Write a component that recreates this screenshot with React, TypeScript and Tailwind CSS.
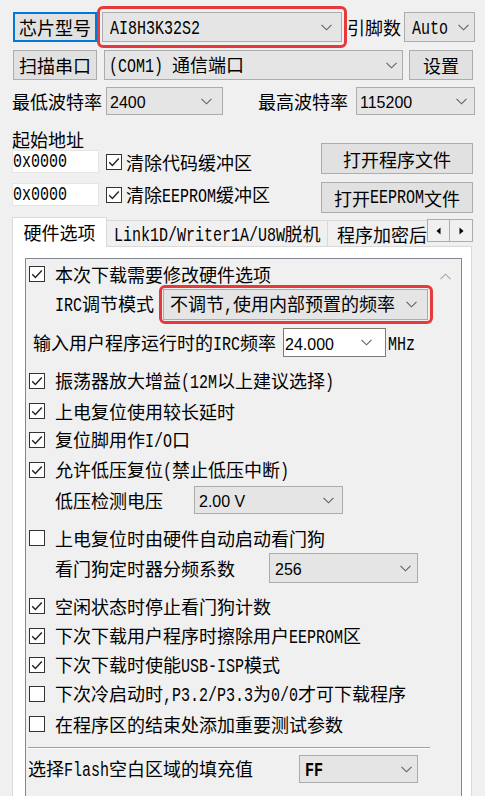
import React from "react";

const CJK = "font-['Noto_Sans_CJK_SC',sans-serif]";

function T({ s }: { s: string }) {
  const parts = s.split(/([\x20-\x7e]+)/);
  return (
    <>
      {parts.map((p, i) =>
        p === "" ? null : /^[\x20-\x7e]+$/.test(p) ? (
          <span
            key={i}
            className="inline-block origin-left scale-x-75 font-['Liberation_Mono',monospace] text-[20px] leading-[16px] whitespace-pre"
            style={{ width: p.length * 9 }}
          >
            {p}
          </span>
        ) : (
          <span key={i}>{p}</span>
        )
      )}
    </>
  );
}

function Sans({ children }: { children: React.ReactNode }) {
  return <span className="font-['Liberation_Sans',sans-serif] text-[16px] whitespace-pre">{children}</span>;
}

function Chev({ up = false, color = "#606060" }: { up?: boolean; color?: string }) {
  return (
    <svg width="11" height="7" viewBox="0 0 11 7" className="shrink-0">
      <polyline
        points={up ? "0.5,6.2 5.5,1.2 10.5,6.2" : "0.5,0.8 5.5,5.8 10.5,0.8"}
        fill="none"
        stroke={color}
        strokeWidth="1.1"
      />
    </svg>
  );
}

function Combo({
  className = "",
  children,
  white = false,
}: {
  className?: string;
  children: React.ReactNode;
  white?: boolean;
}) {
  return (
    <div
      className={
        "flex items-center justify-between shrink-0 border " +
        (white ? "bg-white border-[#7a7a7a] " : "bg-[#e5e5e5] border-[#acacac] ") +
        className
      }
    >
      <span className="whitespace-nowrap">{children}</span>
      <Chev />
    </div>
  );
}

function Btn({ className = "", children }: { className?: string; children: React.ReactNode }) {
  return (
    <div
      className={
        "flex items-center justify-center shrink-0 bg-[#e1e1e1] border border-[#adadad] whitespace-nowrap " +
        className
      }
    >
      {children}
    </div>
  );
}

function Box({ checked = true, className = "" }: { checked?: boolean; className?: string }) {
  return (
    <div className={"w-[16px] h-[16px] shrink-0 border border-[#333333] bg-white flex items-center justify-center " + className}>
      {checked && (
        <svg width="14" height="14" viewBox="0 0 14 14">
          <polyline points="2.2,7.2 5.4,10.4 11.8,3.6" fill="none" stroke="#222222" strokeWidth="1.4" />
        </svg>
      )}
    </div>
  );
}

function CheckRow({
  h,
  s,
  checked = true,
}: {
  h: string;
  s: string;
  checked?: boolean;
}) {
  return (
    <div className={"flex items-center pl-[3px] " + h}>
      <Box checked={checked} />
      <span className="ml-[10px] whitespace-nowrap">
        <T s={s} />
      </span>
    </div>
  );
}

function Tri({ left }: { left: boolean }) {
  return (
    <svg width="5" height="8" viewBox="0 0 5 8">
      <polygon points={left ? "4.5,0.5 0.5,4 4.5,7.5" : "0.5,0.5 4.5,4 0.5,7.5"} fill="#000000" />
    </svg>
  );
}

export default function App() {
  return (
    <div className={`w-[485px] h-[796px] overflow-hidden bg-[#f0f0f0] text-black text-[18px] leading-none pt-[12px] ${CJK}`}>
      {/* Row 1 */}
      <div className="flex items-center h-[30px] pl-[13px]">
        <div className="w-[84px] h-[30px] shrink-0 flex items-center justify-center bg-[#e1e1e1] border-2 border-[#0078d7]">
          芯片型号
        </div>
        <div className="w-[250px] h-[42px] shrink-0 border-[3px] border-[#e5393c] rounded-[6px] flex items-center pl-[2px]">
          <Combo className="w-[240px] h-[30px] pl-[7px] pr-[9px]">
            <T s="AI8H3K32S2" />
          </Combo>
        </div>
        <span className="w-[57px] shrink-0 whitespace-nowrap">引脚数</span>
        <Combo className="w-[71px] h-[30px] pl-[7px] pr-[5px]">
          <T s="Auto" />
        </Combo>
      </div>

      {/* Row 2 */}
      <div className="flex items-center h-[30px] mt-[8px] pl-[13px]">
        <Btn className="w-[84px] h-[30px]">扫描串口</Btn>
        <Combo className="ml-[7px] w-[299px] h-[30px] pl-[4px] pr-[5px]">
          <T s="(COM1) " />
          通信端口
        </Combo>
        <Btn className="ml-[6px] w-[64px] h-[30px]">设置</Btn>
      </div>

      {/* Row 3 */}
      <div className="flex items-center h-[28px] mt-[7px] pl-[12px]">
        <span className="w-[94px] shrink-0 whitespace-nowrap">最低波特率</span>
        <Combo className="w-[117px] h-[28px] pl-[3px] pr-[10px]">
          <Sans>2400</Sans>
        </Combo>
        <span className="ml-[35px] w-[98px] shrink-0 whitespace-nowrap">最高波特率</span>
        <Combo className="w-[119px] h-[28px] pl-[3px] pr-[7px]">
          <Sans>115200</Sans>
        </Combo>
      </div>

      {/* Start address section */}
      <div className="flex pl-[12px]">
        <div className="w-[300px] shrink-0">
          <div className="h-[18px] mt-[15px] mb-[2px] flex items-center">起始地址</div>
          <div className="flex items-center h-[23px]">
            <div className="w-[87px] h-[23px] bg-white border border-[#e6e6e6] flex items-center">
              <T s="0x0000" />
            </div>
            <Box className="ml-[7px]" />
            <span className="ml-[4px] whitespace-nowrap">清除代码缓冲区</span>
          </div>
          <div className="flex items-center h-[23px] mt-[10px]">
            <div className="w-[87px] h-[23px] bg-white border border-[#e6e6e6] flex items-center">
              <T s="0x0000" />
            </div>
            <Box className="ml-[7px]" />
            <span className="ml-[4px] whitespace-nowrap">
              <T s="清除EEPROM缓冲区" />
            </span>
          </div>
        </div>
        <div className="ml-[9px]">
          <Btn className="w-[152px] h-[31px] mt-[28px]">打开程序文件</Btn>
          <Btn className="w-[152px] h-[31px] mt-[8px]">
            <T s="打开EEPROM文件" />
          </Btn>
        </div>
      </div>

      {/* Tabs */}
      <div className="mt-[4px] ml-[12px] w-[461px] h-[29px] flex items-end relative z-10">
        <div className="w-[95px] h-[30px] -mb-[1px] shrink-0 bg-white border border-b-0 border-[#d9d9d9] flex items-center justify-center pb-[1px]">
          硬件选项
        </div>
        <div className="w-[221px] h-[26px] shrink-0 border-t border-r border-[#d9d9d9] flex items-center justify-center">
          <span className="whitespace-nowrap">
            <T s="Link1D/Writer1A/U8W" />
            脱机
          </span>
        </div>
        <div className="w-[99px] h-[26px] shrink-0 border-t border-[#d9d9d9] flex items-center pl-[9px] overflow-hidden whitespace-nowrap">
          <span className="leading-[22px]">程序加密后下载</span>
        </div>
        <div className="self-start mt-[2px] flex">
          <div className="w-[23px] h-[23px] border border-[#adadad] bg-[#f0f0f0] flex items-center justify-center">
            <Tri left />
          </div>
          <div className="w-[23px] h-[23px] border border-l-0 border-[#adadad] bg-[#f0f0f0] flex items-center justify-center">
            <Tri left={false} />
          </div>
        </div>
      </div>

      {/* Panel */}
      <div className="ml-[12px] w-[460px] h-[560px] bg-white border border-[#d9d9d9] pt-[11px] pl-[12px]">
        <div className="w-[437px] h-[560px] border border-[#828790] bg-[#f0f0f0] flex">
          <div className="w-[404px] shrink-0 flex flex-col">
            <CheckRow h="h-[30px]" s="本次下载需要修改硬件选项" />
            <div className="flex items-center h-[30px] pl-[29px]">
              <span className="w-[104px] shrink-0 whitespace-nowrap">
                <T s="IRC调节模式" />
              </span>
              <div className="w-[274px] h-[39px] shrink-0 border-[3px] border-[#e5393c] rounded-[6px] flex items-center pl-[1px]">
                <Combo className="w-[265px] h-[31px] pl-[6px] pr-[10px]">
                  <T s="不调节,使用内部预置的频率" />
                </Combo>
              </div>
            </div>
            <div className="flex items-center h-[47px] pl-[7px]">
              <span className="w-[250px] shrink-0 whitespace-nowrap">
                <T s="输入用户程序运行时的IRC频率" />
              </span>
              <Combo white className="w-[103px] h-[29px] pl-[1px] pr-[13px]">
                <Sans>24.000</Sans>
              </Combo>
              <span className="ml-[2px]">
                <T s="MHz" />
              </span>
            </div>
            <CheckRow h="h-[30px]" s="振荡器放大增益(12M以上建议选择)" />
            <CheckRow h="h-[29px]" s="上电复位使用较长延时" />
            <CheckRow h="h-[30px]" s="复位脚用作I/O口" />
            <CheckRow h="h-[29px]" s="允许低压复位(禁止低压中断)" />
            <div className="flex items-center h-[32px] pl-[29px]">
              <span className="w-[139px] shrink-0 whitespace-nowrap">低压检测电压</span>
              <Combo className="w-[149px] h-[28px] pl-[4px] pr-[8px]">
                <Sans>2.00 V</Sans>
              </Combo>
            </div>
            <div className="mt-[7px]">
              <CheckRow h="h-[30px]" s="上电复位时由硬件自动启动看门狗" checked={false} />
            </div>
            <div className="flex items-center h-[30px] pl-[29px]">
              <span className="w-[214px] shrink-0 whitespace-nowrap">看门狗定时器分频系数</span>
              <Combo className="w-[149px] h-[30px] pl-[5px] pr-[6px]">
                <Sans>256</Sans>
              </Combo>
            </div>
            <div className="mt-[8px]">
              <CheckRow h="h-[30px]" s="空闲状态时停止看门狗计数" />
            </div>
            <CheckRow h="h-[29px]" s="下次下载用户程序时擦除用户EEPROM区" />
            <CheckRow h="h-[29px]" s="下次下载时使能USB-ISP模式" />
            <CheckRow h="h-[30px]" s="下次冷启动时,P3.2/P3.3为0/0才可下载程序" checked={false} />
            <CheckRow h="h-[30px]" s="在程序区的结束处添加重要测试参数" checked={false} />
            <div className="mt-[8px] ml-[2px] w-[402px] h-[1px] bg-[#a0a0a0]" />
            <div className="h-[1px] ml-[2px] w-[402px] bg-white" />
            <div className="flex items-center h-[28px] mt-[6px] pl-[2px]">
              <span className="w-[271px] shrink-0 whitespace-nowrap">
                <T s="选择Flash空白区域的填充值" />
              </span>
              <Combo className="w-[119px] h-[28px] pl-[5px] pr-[5px]">
                <span className="font-bold">
                  <T s="FF" />
                </span>
              </Combo>
            </div>
          </div>
          <div className="w-[31px] shrink-0 flex justify-center pt-[14px]">
            <Chev up color="#a6a6a6" />
          </div>
        </div>
      </div>
    </div>
  );
}
